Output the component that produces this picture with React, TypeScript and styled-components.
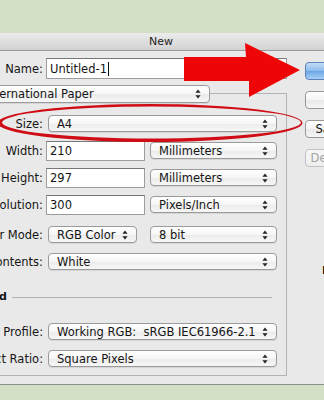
import React from "react";
import styled, { createGlobalStyle } from "styled-components";

const GlobalStyle = createGlobalStyle`
  html, body {
    margin: 0;
    padding: 0;
  }
  body {
    background: #d3e0c5;
    font-family: "DejaVu Sans", "Liberation Sans", sans-serif;
    font-size: 11px;
    color: #151515;
  }
`;

type Row = { label: string; mt?: number; kind: "input" | "select"; value: string; unit?: string; short?: boolean };

const fields: Row[] = [
  { label: "Size:", kind: "select", value: "A4", mt: 7 },
  { label: "Width:", kind: "input", value: "210", unit: "Millimeters" },
  { label: "Height:", kind: "input", value: "297", unit: "Millimeters" },
  { label: "Resolution:", kind: "input", value: "300", unit: "Pixels/Inch" },
  { label: "Color Mode:", kind: "select", value: "RGB Color", unit: "8 bit", short: true, mt: 3 },
  { label: "Background Contents:", kind: "select", value: "White" },
];

const advanced: Row[] = [
  { label: "Color Profile:", kind: "select", value: "Working RGB:  sRGB IEC61966-2.1", mt: 8 },
  { label: "Pixel Aspect Ratio:", kind: "select", value: "Square Pixels" },
];

function Arrows() {
  return (
    <svg width="6" height="10" viewBox="0 0 6 10">
      <path d="M3 0.5 L5.6 3.8 L0.4 3.8 Z" fill="#222" />
      <path d="M3 9.5 L5.6 6.2 L0.4 6.2 Z" fill="#222" />
    </svg>
  );
}

function PopUp({ value, w, ml }: { value: string; w: number; ml?: number }) {
  return (
    <Select $w={w} $ml={ml ?? 2}>
      <SelectText>{value}</SelectText>
      <Arrows />
    </Select>
  );
}

function FieldRow({ row }: { row: Row }) {
  return (
    <Field $mt={row.mt ?? 0}>
      <FieldLabel>{row.label}</FieldLabel>
      {row.kind === "input" ? (
        <TextBox>{row.value}</TextBox>
      ) : (
        <PopUp value={row.value} w={row.short ? 89 : row.unit ? 127 : 229} />
      )}
      {row.unit && <PopUp value={row.unit} w={127} ml={row.kind === "input" ? 5 : 13} />}
    </Field>
  );
}

export default function App() {
  return (
    <Page>
      <GlobalStyle />
      <Dialog>
        <TitleBar>New</TitleBar>
        <Body>
          <Main>
            <NameRow>
              <NameLabel>Name:</NameLabel>
              <NameInput>
                Untitled-1<Caret />
              </NameInput>
            </NameRow>
            <GroupBox>
              <PopUp value="International Paper" w={235} ml={4} />
              {fields.map((r) => (
                <FieldRow key={r.label} row={r} />
              ))}
              <AdvancedRow>
                <AdvancedLabel>▾ Advanced</AdvancedLabel>
                <Rule />
              </AdvancedRow>
              {advanced.map((r) => (
                <FieldRow key={r.label} row={r} />
              ))}
            </GroupBox>
          </Main>
          <Side>
            <Button $kind="default">OK</Button>
            <Button>Cancel</Button>
            <Button>Save Preset…</Button>
            <Button $kind="disabled">Delete Preset…</Button>
            <ImageSize>Image Size:</ImageSize>
          </Side>
        </Body>
      </Dialog>

      <Marks width="324" height="400" viewBox="0 0 324 400">
        <path
          fillRule="evenodd"
          fill="#d00d16"
          d="M-2.5 123 A152.5 19 0 1 0 302.5 123 A152.5 19 0 1 0 -2.5 123 Z M2 122.5 A149.5 16 0 1 0 301 122.5 A149.5 16 0 1 0 2 122.5 Z"
        />
        <path fill="#ee0505" d="M184 57 L246 57 L245 43 L300 70 L249 97 L249 81 L184 81 Z" />
      </Marks>
    </Page>
  );
}

const Page = styled.div`
  position: relative;
  width: 324px;
  height: 400px;
  overflow: hidden;
  background: #d3e0c5;
  padding-top: 33px;
  box-sizing: border-box;
`;

const Dialog = styled.div`
  width: 490px;
  margin-left: -60px;
  background: #e9e9e9;
  border-bottom: 1px solid #8c8c8c;
`;

const TitleBar = styled.div`
  height: 17px;
  padding-right: 48px;
  border-bottom: 1px solid #9a9a9a;
  background: linear-gradient(#ececec, #d2d2d2);
  text-align: center;
  line-height: 18px;
  font-size: 11px;
  color: #222;
`;

const Body = styled.div`
  display: flex;
  padding-top: 7px;
`;

const Main = styled.div`
  flex: none;
  width: 347px;
  padding-bottom: 8px;
`;

const NameRow = styled.div`
  display: flex;
  align-items: center;
  height: 21px;
`;

const NameLabel = styled.div`
  width: 103px;
  margin-right: 3px;
  text-align: right;
  font-size: 11.5px;
`;

const NameInput = styled.div`
  flex: 1;
  height: 21px;
  box-sizing: border-box;
  display: flex;
  align-items: center;
  padding-left: 3px;
  background: #fff;
  border: 1px solid #9c9c9c;
  border-top-color: #777;
  font-size: 11.5px;
`;

const Caret = styled.span`
  width: 1px;
  height: 14px;
  margin-left: 1px;
  background: #111;
`;

const GroupBox = styled.div`
  margin: 14px 0 0 30px;
  border: 1px solid #b3b3b3;
  padding: 0 9px 3px 0;
  & > :first-child {
    margin-top: -9px;
    height: 18px;
  }
`;

const Field = styled.div<{ $mt: number }>`
  display: flex;
  align-items: center;
  height: 27px;
  margin-top: ${(p) => p.$mt}px;
`;

const FieldLabel = styled.div`
  flex: none;
  width: 72px;
  margin-right: 3px;
  display: flex;
  justify-content: flex-end;
  white-space: nowrap;
  font-size: 11.5px;
`;

const TextBox = styled.div`
  flex: none;
  width: 99px;
  height: 20px;
  box-sizing: border-box;
  padding-left: 3px;
  display: flex;
  align-items: center;
  background: #fff;
  border: 1px solid #9c9c9c;
  border-top-color: #777;
  font-size: 11.5px;
`;

const Select = styled.div<{ $w: number; $ml: number }>`
  flex: none;
  width: ${(p) => p.$w}px;
  margin-left: ${(p) => p.$ml}px;
  height: 17px;
  box-sizing: border-box;
  display: flex;
  align-items: center;
  justify-content: space-between;
  padding: 0 8px 0 8px;
  border: 1px solid #9a9a9a;
  border-radius: 4px;
  background: linear-gradient(#ffffff, #f6f6f6 50%, #ebebeb 51%, #f7f7f7);
  box-shadow: 0 1px 0 rgba(0, 0, 0, 0.08);
  font-size: 11.5px;
`;

const SelectText = styled.span`
  white-space: pre;
`;

const AdvancedRow = styled.div`
  display: flex;
  align-items: center;
  height: 27px;
  margin-top: 8px;
`;

const AdvancedLabel = styled.div`
  flex: none;
  width: 36px;
  display: flex;
  justify-content: flex-end;
  white-space: nowrap;
  font-weight: bold;
`;

const Rule = styled.div`
  flex: 1;
  margin: 1px 5px 0 5px;
  border-top: 1px solid #b3b3b3;
`;

const Side = styled.div`
  flex: none;
  width: 100px;
  margin-left: 18px;
  padding-top: 4px;
  display: flex;
  flex-direction: column;
  gap: 11px;
`;

const Button = styled.div<{ $kind?: "default" | "disabled" }>`
  height: 18px;
  box-sizing: border-box;
  display: flex;
  align-items: center;
  justify-content: center;
  white-space: nowrap;
  border-radius: 4px;
  font-size: 11.5px;
  border: 1px solid ${(p) => (p.$kind === "default" ? "#5a82b8" : p.$kind === "disabled" ? "#c2c2c2" : "#979797")};
  color: ${(p) => (p.$kind === "disabled" ? "#a4a4a4" : "#151515")};
  background: ${(p) =>
    p.$kind === "default"
      ? "linear-gradient(#c4dcf6, #8dbcec 50%, #6aa6e6 51%, #a8d0f6)"
      : p.$kind === "disabled"
      ? "linear-gradient(#f7f7f7, #eeeeee)"
      : "linear-gradient(#ffffff, #f4f4f4 50%, #e9e9e9 51%, #f6f6f6)"};
`;

const ImageSize = styled.div`
  margin-top: 86px;
  padding-left: 17px;
  font-weight: bold;
  white-space: nowrap;
`;

const Marks = styled.svg`
  position: absolute;
  left: 0;
  top: 0;
  pointer-events: none;
`;
